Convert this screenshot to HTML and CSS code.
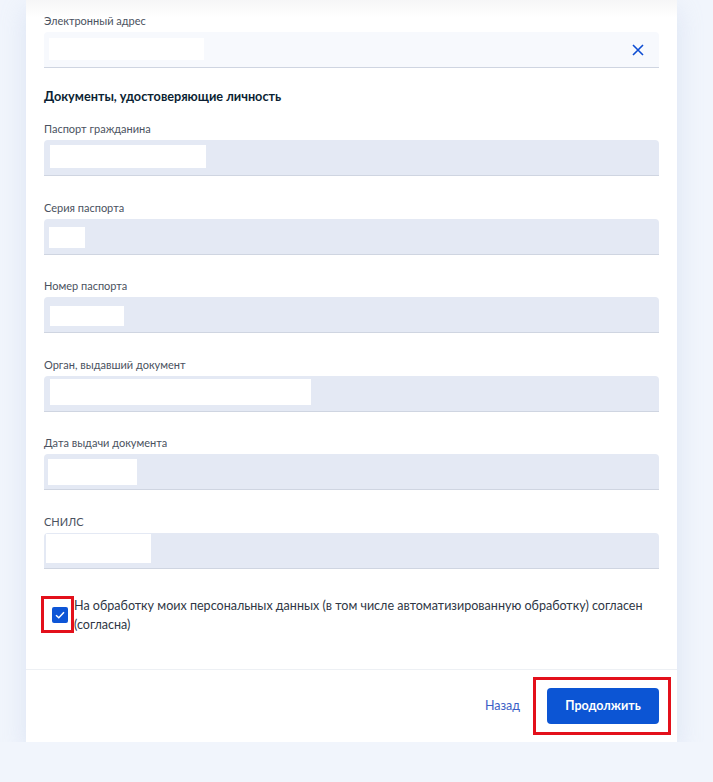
FILE: index.html
```html
<!DOCTYPE html>
<html lang="ru">
<head>
    <meta charset="UTF-8">
    <meta name="viewport" content="width=device-width, initial-scale=1.0">
    <title>Персональные данные</title>
    <link rel="stylesheet" href="styles.css">
</head>
<body>
    <div class="card">
        <div class="card-body">
            <div class="form-group">
                <label class="field-label">Электронный адрес</label>
                <div class="field field-active">
                    <span class="mask mask-email"></span>
                    <button class="clear-btn" type="button" aria-label="Очистить">
                        <svg width="12" height="12" viewBox="0 0 12 12"><path d="M1 1L11 11M11 1L1 11" stroke="#0d4cd3" stroke-width="1.6" fill="none"/></svg>
                    </button>
                </div>
            </div>

            <h3 class="section-title">Документы, удостоверяющие личность</h3>

            <div class="form-group">
                <label class="field-label">Паспорт гражданина</label>
                <div class="field"><span class="mask mask-passport"></span></div>
            </div>
            <div class="form-group">
                <label class="field-label">Серия паспорта</label>
                <div class="field"><span class="mask mask-series"></span></div>
            </div>
            <div class="form-group">
                <label class="field-label">Номер паспорта</label>
                <div class="field"><span class="mask mask-number"></span></div>
            </div>
            <div class="form-group">
                <label class="field-label">Орган, выдавший документ</label>
                <div class="field"><span class="mask mask-issuer"></span></div>
            </div>
            <div class="form-group">
                <label class="field-label">Дата выдачи документа</label>
                <div class="field"><span class="mask mask-date"></span></div>
            </div>
            <div class="form-group">
                <label class="field-label">СНИЛС</label>
                <div class="field"><span class="mask mask-snils"></span></div>
            </div>

            <div class="agree">
                <div class="agree-box highlight">
                    <span class="checkbox">
                        <svg width="10" height="8" viewBox="0 0 10 8"><path d="M1 4.2L3.8 6.8L9 1.2" stroke="#fff" stroke-width="1.5" fill="none"/></svg>
                    </span>
                </div>
                <p class="agree-text">На обработку моих персональных данных (в том числе автоматизированную обработку) согласен (согласна)</p>
            </div>
        </div>

        <div class="card-footer">
            <a href="#" class="back-link">Назад</a>
            <div class="highlight next-wrap">
                <button class="btn-primary" type="button">Продолжить</button>
            </div>
        </div>
    </div>
</body>
</html>
```

FILE: styles.css
```css
body {
    margin: 0;
    background: #f1f5fc;
    font-family: Lato, "Noto Sans", Arial, sans-serif;
    color: #0b1f33;
}
.card {
    width: 651px;
    margin-left: 26px;
    background: linear-gradient(#f6f6f7, #ffffff 18px);
    box-shadow: 0 10px 24px rgba(170, 190, 225, 0.3);
}
.card-body {
    padding: 13px 18px 35px;
}
.form-group + .form-group {
    margin-top: 23.6px;
}
.field-label {
    display: block;
    font-size: 11px;
    line-height: 16px;
    color: #4a5260;
    margin-bottom: 3px;
}
.field {
    height: 35px;
    display: flex;
    align-items: flex-start;
    background: #e4e9f4;
    border-bottom: 1px solid #cfd5e1;
    border-radius: 4px 4px 0 0;
}
.field-active {
    background: #f7f9fd;
    align-items: center;
}
.mask {
    display: block;
    background: #ffffff;
}
.mask-email { margin: 0 0 1px 5px; width: 155px; height: 22px; }
.mask-passport { margin: 5px 0 0 6px; width: 156px; height: 23px; }
.mask-series { margin: 8px 0 0 5px; width: 36px; height: 21px; }
.mask-number { margin: 9px 0 0 6px; width: 74px; height: 20px; }
.mask-issuer { margin: 3px 0 0 6px; width: 261px; height: 26px; }
.mask-date { margin: 5px 0 0 4px; width: 89px; height: 26px; }
.mask-snils { margin: 1px 0 0 2px; width: 105px; height: 29px; }
.clear-btn {
    margin-left: auto;
    margin-right: 15px;
    padding: 0;
    border: none;
    background: none;
    display: flex;
    cursor: pointer;
}
.section-title {
    margin: 19px 0 16px;
    font-size: 12.7px;
    line-height: 18px;
    font-weight: 700;
}
.agree {
    display: flex;
    align-items: center;
    margin-top: 27px;
    margin-left: -3px;
}
.highlight {
    border: 3px solid #e3101b;
}
.agree-box {
    display: flex;
    align-items: center;
    padding-left: 8px;
    box-sizing: border-box;
    width: 33px;
    height: 37px;
    flex-shrink: 0;
}
.checkbox {
    width: 16px;
    height: 16px;
    border-radius: 2px;
    background: #0d55d6;
    display: flex;
    align-items: center;
    justify-content: center;
}
.agree-text {
    margin: 0;
    font-size: 12.55px;
    line-height: 19px;
    color: #2f3745;
}
.card-footer {
    border-top: 1px solid #edf0f4;
    display: flex;
    align-items: center;
    justify-content: flex-end;
    padding: 7px 6px 7px 18px;
}
.back-link {
    color: #3b5fc6;
    text-decoration: none;
    font-size: 12.5px;
    margin-right: 13px;
}
.next-wrap {
    padding: 8px 9px 8px 11px;
}
.btn-primary {
    display: block;
    width: 112px;
    height: 36px;
    border: none;
    border-radius: 4px;
    background: #0c55d4;
    color: #ffffff;
    font-family: inherit;
    font-size: 12.5px;
    font-weight: 700;
    cursor: pointer;
}
```
